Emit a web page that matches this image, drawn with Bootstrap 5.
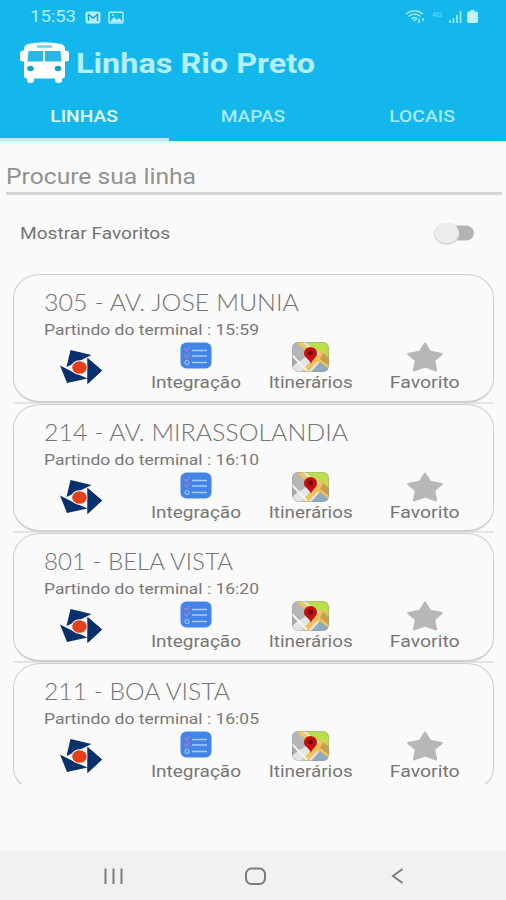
<!DOCTYPE html>
<html lang="pt-BR">
<head>
<meta charset="utf-8">
<meta name="viewport" content="width=device-width, initial-scale=1">
<title>Linhas Rio Preto</title>
<link href="https://cdn.jsdelivr.net/npm/bootstrap@5.3.0/dist/css/bootstrap.min.css" rel="stylesheet">
<style>
body{font-family:Roboto,"Liberation Sans",sans-serif;background:#fafafa;color:#757575;width:506px;height:900px;overflow:hidden}
svg{display:block;flex:none}
.fit{display:inline-block;white-space:nowrap;transform-origin:0 50%}
.fit-c{transform-origin:50% 50%}
.app-head{background:#14b7ec;height:141px;color:#b5efff}
.status{height:34px;padding:0 27px 0 30px;font-size:16px;line-height:34px;color:#b3efff}
.brand-row{height:57px;padding-left:20px}
.brand-name{font-size:27px;font-weight:700;line-height:58px;margin-left:7px;padding-top:2px}
.tabs{height:50px}
.tabs a{width:168.67px;color:#a5ebfd;font-size:16.5px;font-weight:500;line-height:52px;height:50px;text-decoration:none;text-align:center;border-bottom:3px solid transparent}
.tabs a.current{color:#e2faff;border-color:#bde9f8}
.head-edge{height:4px;background:linear-gradient(#eceff0,#fafafa)}
.search{height:50px;margin:0 4px 0 6px;border-bottom:3px solid #d6d6d6;font-size:21.5px;line-height:64px;color:#919191}
.favs{height:79px;padding:0 31px 3px 20px;font-size:16.5px;line-height:76px;color:#747474}
.favs .fit{padding-top:2px}
.lines{height:510px;padding:0 12px 0 13px;overflow:hidden}
.line-card{height:129.7px;flex:none;border-bottom:2px solid #e4e4e4}
.line-in{height:128.7px;border:1.5px solid #cfcfcf;border-bottom-width:2px;border-radius:27px/24px;padding:12px 9px 0 10px;background:#fafafa}
.line-name{font-family:Lato,sans-serif;font-weight:300;font-size:22.5px;line-height:32px;padding-left:20px;color:#737373}
.line-time{font-size:15px;line-height:23px;padding-left:20px;color:#777}
.acts .act{width:114.6px;height:54px;font-size:16px;line-height:20px;color:#767676}
.act-pic{height:31px}
.navbar-sys{height:49px;background:#f1f1f1;margin-top:auto}
</style>
</head>
<body class="d-flex flex-column">
<svg width="0" height="0" class="position-absolute">
<defs>
<symbol id="logo" viewBox="0 0 42 34"><path d="M10.500 0 31.500 5Q20 11 6.500 17ZM0 15.500Q12 22 27.500 28.500L7 33ZM27.500 8 42 20.500 27.500 34Z" fill="#07306d"/><ellipse cx="19.500" cy="17.500" rx="8.300" ry="7.300" fill="#fafafa"/><ellipse cx="19.500" cy="17.500" rx="7.300" ry="6.300" fill="#e5401c"/><path d="M27.500 8 42 20.500 27.500 34Z" fill="#07306d"/></symbol>
<symbol id="list" viewBox="0 0 32 27"><rect x=".5" y=".5" width="31" height="26" rx="6" fill="#4384e8"/><path d="M12 8.500h15M12 14h15M12 20.500h15" stroke="#a9cafa" stroke-width="1.300"/><g fill="none" stroke-width="1.200"><path d="m4.500 7 2 2 3-4M4.500 13l2 2 3-4" stroke="#c07bab"/><circle cx="7" cy="20.500" r="2" stroke="#9bc1f5"/></g></symbol>
<symbol id="map" viewBox="0 0 37 30"><clipPath id="mc"><rect width="37" height="30" rx="6"/></clipPath><g clip-path="url(#mc)"><path d="M0 0h37v30H0z" fill="#e4e5e5"/><path d="M0 0h9l11 11L8 19 0 12Z" fill="#b5b6b8"/><path d="M0 12 8 18 0 25Z" fill="#a7a9ab"/><path d="M13 0h24v18L22 7Z" fill="#b8e04c"/><path d="m7 0 30 27" stroke="#f0c65b" stroke-width="4"/><path d="M33 9 12 30" stroke="#efc25a" stroke-width="5"/><path d="m31 11 6 5v8l-9-7Z" fill="#c99c52"/><path d="m28 20 9 7v3H19Z" fill="#8fabbd"/><path d="m0 13 15 16" stroke="#f4f5f5" stroke-width="2"/></g><rect x=".5" y=".5" width="36" height="29" rx="6" fill="none" stroke="#999" stroke-opacity=".4"/><path d="M19 22c-1-5-7-6-7-11a6.500 6 0 0 1 13 0c0 5-5 6-6 11Z" fill="#c90c10"/><ellipse cx="18.500" cy="11" rx="2.600" ry="2.200" fill="#730003"/></symbol>
<symbol id="star" viewBox="0 0 38 31"><path d="M19 1.500 24.500 10 36.500 12.300 28.500 19 30.500 29.500 19 25.500 7.500 29.500 9.500 19 1.500 12.300 13.500 10Z" fill="#b7b7b7" stroke="#b7b7b7" stroke-width="2" stroke-linejoin="round"/></symbol>
</defs>
</svg>

<header class="app-head flex-shrink-0">
  <div class="status d-flex align-items-center">
    <span class="fit" data-w="46">15:53</span>
    <svg width="40" height="13" viewBox="0 0 40 13" id="notif"><rect x=".5" y=".5" width="15" height="12" rx="2" fill="#b3efff"/><path d="M3.500 10V3.500L8 7l4.500-3.500V10" fill="none" stroke="#169fce" stroke-width="1.400"/><rect x="24" y="1.200" width="14" height="10.800" rx="1" fill="none" stroke="#b3efff" stroke-width="1.500"/><path d="m25 11 4-5 3 3 2-2 4 4Z" fill="#b3efff"/><circle cx="28" cy="4" r="1" fill="#b3efff"/></svg>
    <svg class="ms-auto" width="74" height="16" viewBox="0 0 74 16"><g fill="none" stroke="#a5e8dc" stroke-width="1.500"><path d="M1 5q8.500-6.500 17 0M3.500 7.500q6-5 12 0M6.500 10q3-2.500 6 0"/></g><path d="m7.500 10.500 2 2 2-2Z" fill="#a5e8dc"/><path d="M14 10v4M18 9v3" stroke="#a5e8dc" stroke-width="1.500"/><text x="27" y="8" font-size="6.500" textLength="10" lengthAdjust="spacingAndGlyphs" fill="#7bd9f2">4G</text><path d="M45 14v-3M48.500 14V9M52 14V6M55.500 14V2" stroke="#a6eafa" stroke-width="1.600"/><path d="M65.500 1h4v1.500H71q2 0 2 2V12q0 2-2 2h-7q-2 0-2-2V4.500q0-2 2-2h1.500Z" fill="#c3f3ff"/></svg>
  </div>
  <div class="brand-row d-flex align-items-center">
    <svg width="49" height="42" viewBox="0 0 49 42"><path d="M8 2Q24.500-1.500 41 2q4 1 4 5v1.500q4 0 4 3v6q0 2-4 2v14q0 3-3 3v2q0 2.500-3.500 2.500T35 38.500v-2H14v2q0 2.500-3.500 2.500T7 38.500v-2q-3 0-3-3V19.500q-4 0-4-2v-6q0-3 4-3V7q0-4 4-5Z" fill="#fff"/><path d="M18 4.500h13" stroke="#78cce5" stroke-width="2.500" stroke-linecap="round"/><path d="M8.500 9h14.700v10.500H7.500ZM25 9h15.500l1 10.500H25Z" fill="#27b8e6"/><ellipse cx="10.500" cy="26.500" rx="3.300" ry="2.800" fill="#159fc9"/><ellipse cx="38" cy="26.500" rx="3.300" ry="2.800" fill="#159fc9"/></svg>
    <span class="brand-name fit" data-w="239">Linhas Rio Preto</span>
  </div>
  <nav class="tabs d-flex">
    <a href="#" class="current"><span class="fit fit-c" data-w="67.5">LINHAS</span></a>
    <a href="#"><span class="fit fit-c" data-w="64.5">MAPAS</span></a>
    <a href="#"><span class="fit fit-c" data-w="65.5">LOCAIS</span></a>
  </nav>
</header>
<div class="head-edge flex-shrink-0"></div>
<div class="search flex-shrink-0"><span class="fit" data-w="190">Procure sua linha</span></div>
<div class="favs d-flex align-items-center justify-content-between flex-shrink-0">
  <span class="fit" data-w="150">Mostrar Favoritos</span>
  <svg width="42" height="24" viewBox="0 0 42 24"><rect x="10" y="4.500" width="31" height="15" rx="8" fill="#b3b3b3"/><ellipse cx="13.500" cy="12.800" rx="12.800" ry="10.800" fill="#d4d4d4"/><ellipse cx="13.500" cy="12" rx="12.200" ry="10.300" fill="#ececec"/></svg>
</div>
<main class="lines d-flex flex-column flex-shrink-0" id="lines"></main>
<footer class="navbar-sys flex-shrink-0">
  <svg width="506" height="49" viewBox="0 0 506 49" fill="none" stroke="#7b7b7b" stroke-width="2"><path d="M105.500 17.500v15.500M113.500 17.500v15.500M121.500 17.500v15.500"/><rect x="246" y="17.500" width="19" height="15.500" rx="5.500"/><path d="m402.500 18-9.500 7 9.500 7"/></svg>
</footer>
<script>
const lines=[["305 - AV. JOSE MUNIA","15:59",255],["214 - AV. MIRASSOLANDIA","16:10",304],["801 - BELA VISTA","16:20",189],["211 - BOA VISTA","16:05",186]];
document.getElementById("lines").innerHTML=lines.map(([n,t,w])=>`
<article class="line-card"><div class="line-in">
<div class="line-name"><span class="fit" data-w="${w}">${n}</span></div>
<div class="line-time"><span class="fit" data-w="215">Partindo do terminal : ${t}</span></div>
<div class="acts d-flex">
<div class="act d-flex justify-content-center pt-1"><svg class="mt-1" width="42" height="34"><use href="#logo"/></svg></div>
<div class="act text-center"><div class="act-pic d-flex justify-content-center"><svg width="32" height="27"><use href="#list"/></svg></div><span class="fit fit-c" data-w="90">Integração</span></div>
<div class="act text-center"><div class="act-pic d-flex justify-content-center"><svg width="37" height="30"><use href="#map"/></svg></div><span class="fit fit-c" data-w="84">Itinerários</span></div>
<div class="act text-center"><div class="act-pic d-flex justify-content-center"><svg width="38" height="30"><use href="#star"/></svg></div><span class="fit fit-c" data-w="70">Favorito</span></div>
</div></div></article>`).join("");
// Stretch each label horizontally to its display width
document.querySelectorAll(".fit").forEach(e=>{e.style.transform=`scaleX(${e.dataset.w/e.getBoundingClientRect().width})`});
document.getElementById("notif").style.marginLeft=(55-document.querySelector(".status .fit").offsetWidth)+"px";
</script>
<script src="https://cdn.jsdelivr.net/npm/bootstrap@5.3.0/dist/js/bootstrap.bundle.min.js"></script>
</body>
</html>
